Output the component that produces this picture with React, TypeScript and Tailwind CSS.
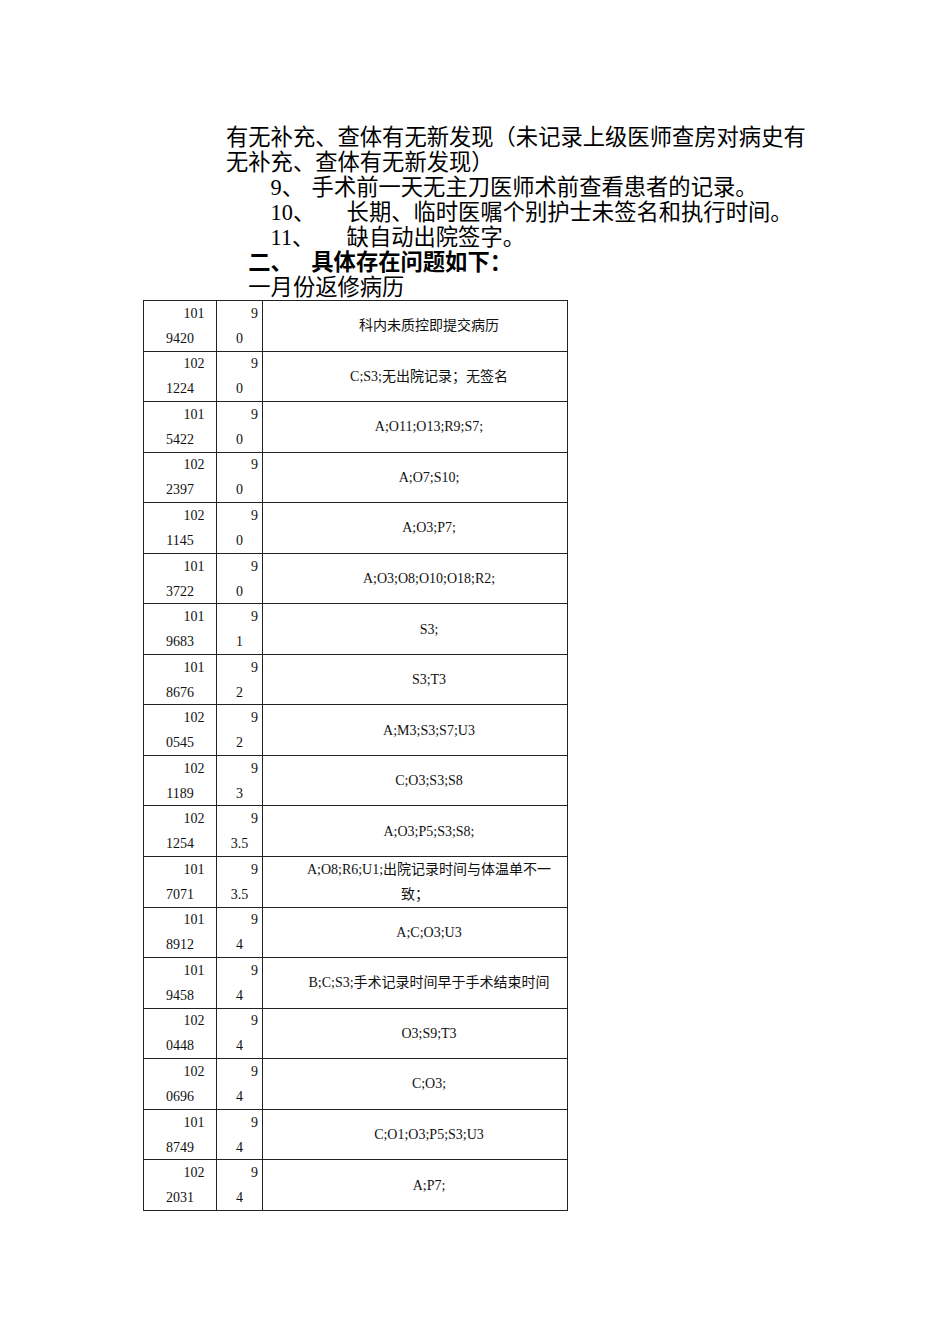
const rows: [string, string, string, string, string][] = [
  ["101", "9420", "9", "0", "科内未质控即提交病历"],
  ["102", "1224", "9", "0", "C;S3;无出院记录；无签名"],
  ["101", "5422", "9", "0", "A;O11;O13;R9;S7;"],
  ["102", "2397", "9", "0", "A;O7;S10;"],
  ["102", "1145", "9", "0", "A;O3;P7;"],
  ["101", "3722", "9", "0", "A;O3;O8;O10;O18;R2;"],
  ["101", "9683", "9", "1", "S3;"],
  ["101", "8676", "9", "2", "S3;T3"],
  ["102", "0545", "9", "2", "A;M3;S3;S7;U3"],
  ["102", "1189", "9", "3", "C;O3;S3;S8"],
  ["102", "1254", "9", "3.5", "A;O3;P5;S3;S8;"],
  ["101", "7071", "9", "3.5", "A;O8;R6;U1;出院记录时间与体温单不一\n致；"],
  ["101", "8912", "9", "4", "A;C;O3;U3"],
  ["101", "9458", "9", "4", "B;C;S3;手术记录时间早于手术结束时间"],
  ["102", "0448", "9", "4", "O3;S9;T3"],
  ["102", "0696", "9", "4", "C;O3;"],
  ["101", "8749", "9", "4", "C;O1;O3;P5;S3;U3"],
  ["102", "2031", "9", "4", "A;P7;"],
];

function Row({ r }: { r: [string, string, string, string, string] }) {
  const lines = r[4].split("\n");
  return (
    <div className="flex h-[50.56px] border-b border-[#222]">
      <div className="w-[73px] shrink-0 border-r border-[#222] flex flex-col justify-center text-center leading-[25px]">
        <div className="indent-[28px]">{r[0]}</div>
        <div>{r[1]}</div>
      </div>
      <div className="w-[46px] shrink-0 border-r border-[#222] flex flex-col justify-center text-center leading-[25px]">
        <div className="indent-[30px]">{r[2]}</div>
        <div>{r[3]}</div>
      </div>
      <div className="flex-1 flex flex-col justify-center text-center leading-[25px]">
        {lines.map((l, i) => (
          <div key={i} className={i === 0 ? "indent-[28px]" : ""}>
            {l}
          </div>
        ))}
      </div>
    </div>
  );
}

export default function App() {
  return (
    <div className="w-[950px] min-h-[1344px] bg-white text-black font-['Liberation_Serif','Noto_Sans_CJK_SC',sans-serif] pt-[125px]">
      <div className="pl-[226px] text-[22.3px] leading-[25px] whitespace-nowrap">
        <div>有无补充、查体有无新发现（未记录上级医师查房对病史有</div>
        <div>无补充、查体有无新发现）</div>
        <div className="pl-[44.6px] flex">
          <span className="w-[41px] shrink-0">9、</span>
          <span>手术前一天无主刀医师术前查看患者的记录。</span>
        </div>
        <div className="pl-[44.6px] flex">
          <span className="w-[76px] shrink-0">10、</span>
          <span>长期、临时医嘱个别护士未签名和执行时间。</span>
        </div>
        <div className="pl-[44.6px] flex">
          <span className="w-[76px] shrink-0">11、</span>
          <span>缺自动出院签字。</span>
        </div>
        <div className="pl-[22.3px] flex font-bold">
          <span className="w-[63px] shrink-0">二、</span>
          <span>具体存在问题如下：</span>
        </div>
        <div className="pl-[22.3px]">一月份返修病历</div>
      </div>
      <div className="ml-[143px] w-[425px] border-t border-l border-r border-[#222] text-[14px] text-[#111]">
        {rows.map((r, i) => (
          <Row key={i} r={r} />
        ))}
      </div>
    </div>
  );
}
